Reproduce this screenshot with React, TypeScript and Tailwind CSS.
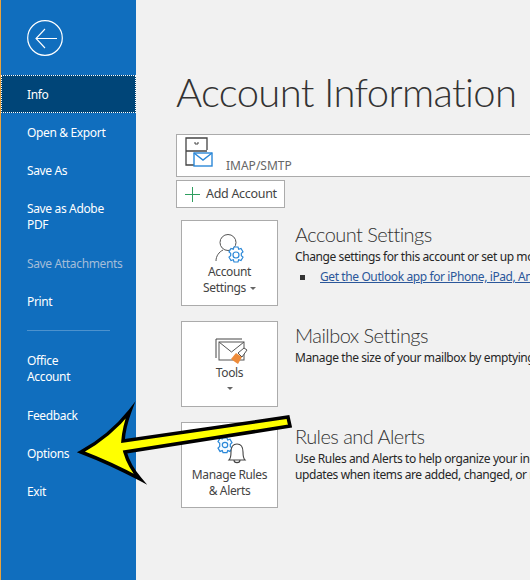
const font = { fontFamily: '"Noto Sans", "Open Sans", sans-serif' }
const headFont = { fontFamily: 'Lato, "Noto Sans", sans-serif' }

function NavItem({ label, active, disabled }: { label: string; active?: boolean; disabled?: boolean }) {
  return (
    <a
      href="#"
      className={
        "flex h-[38px] items-center whitespace-nowrap pl-[26px] pt-[2px] text-[12px] leading-[16px] tracking-[-0.35px] " +
        (active ? "bg-[#004578] text-white outline outline-1 -outline-offset-1 outline-dotted outline-white " : "") +
        (disabled ? "text-[#a3bdd9]" : "text-white")
      }
    >
      {label}
    </a>
  )
}

function AccountIcon() {
  return (
    <svg width="42" height="36" viewBox="0 0 42 36" fill="none">
      <circle cx="15" cy="9.500" r="8" stroke="#555" strokeWidth="1" />
      <path d="M3 28c0-5 3-9 7-11M20 17l3 1" stroke="#555" strokeWidth="1" />
      <path
        d="M21 14h4l.7 2.200 2.300-.8 2 3.400-1.700 1.600v2.200l1.700 1.600-2 3.400-2.300-.8-.7 2.200h-4l-.7-2.200-2.300.8-2-3.400 1.700-1.600v-2.200l-1.700-1.600 2-3.400 2.300.8z"
        stroke="#2b88d8"
        strokeWidth="1.200"
        fill="#fff"
      />
      <circle cx="23" cy="22" r="3" stroke="#2b88d8" strokeWidth="1.200" />
    </svg>
  )
}

function ToolsIcon() {
  return (
    <svg width="34" height="28" viewBox="0 0 34 28" fill="none">
      <path d="M1 20V1h26" stroke="#444" strokeWidth="1" />
      <rect x="4" y="4" width="25" height="18" stroke="#555" strokeWidth="1" fill="#fff" />
      <path d="M4 4l12.500 10L29 4" stroke="#555" strokeWidth="1" />
      <path d="M16 21l5-6 6 4-4 7-3-2z" fill="#ed8b3a" />
      <path d="M23 15l6-5 3 2-5 7z" fill="#fff" stroke="#555" strokeWidth="1" />
    </svg>
  )
}

function RulesIcon() {
  return (
    <svg width="36" height="32" viewBox="0 0 36 32" fill="none">
      <path
        d="M9 1h4l.7 2 2.300-.8 2 3.400-1.700 1.600v2.200l1.700 1.600-2 3.400-2.300-.8-.7 2H9l-.7-2-2.300.8-2-3.400 1.700-1.600V6.200L4 4.600l2-3.400 2.300.8z"
        stroke="#2b88d8"
        strokeWidth="1.200"
        fill="#f7fbff"
      />
      <circle cx="11" cy="8" r="2.700" stroke="#2b88d8" strokeWidth="1.200" />
      <path d="M15 23c2-2 2-4 2-8 0-5 2-8 6-8s6 3 6 8c0 4 0 6 2 8z" stroke="#444" strokeWidth="1.100" fill="#fff" />
      <path d="M20 23c0 3.500 6 3.500 6 0" stroke="#444" strokeWidth="1.100" />
    </svg>
  )
}

function Caret() {
  return <span className="inline-block h-0 w-0 border-x-[3px] border-t-[3px] border-x-transparent border-t-[#666]" />
}

function ToolCard({ children }: { children: React.ReactNode }) {
  return (
    <div className="flex h-[86px] w-[97px] shrink-0 flex-col items-center border border-[#ababab] bg-white text-center text-[12px] leading-[16px] tracking-[-0.35px] text-[#444]">
      {children}
    </div>
  )
}

function Section({ title, children }: { title: string; children: React.ReactNode }) {
  return (
    <div className="ml-[17px] mt-[1px] whitespace-nowrap">
      <h2 className="text-[20px] font-light leading-[26px] tracking-[-0.55px] text-[#333]" style={headFont}>{title}</h2>
      <div className="mt-[2px] text-[12px] leading-[16px] tracking-[-0.4px] text-[#262626]">{children}</div>
    </div>
  )
}

export default function App() {
  return (
    <div className="relative flex h-[580px] w-[530px] overflow-hidden bg-[#f1f1f1]" style={font}>
      {/* Sidebar */}
      <aside className="h-full w-[136px] shrink-0 border-l border-[#e8a33d] bg-[#106ebe]">
        <div className="flex h-[75px] items-start pl-[26px] pt-5">
          <svg width="36" height="36" viewBox="0 0 36 36" fill="none" stroke="#fff">
            <circle cx="18" cy="18" r="17.300" strokeWidth="1.200" />
            <path d="M30 18.500H9M18 9l-9 9.500 9 9.500" strokeWidth="1.100" />
          </svg>
        </div>
        <nav className="flex flex-col">
          <NavItem label="Info" active />
          <NavItem label="Open & Export" />
          <NavItem label="Save As" />
          <div className="flex h-[55px] items-center pl-[26px] pr-6 text-[12px] leading-[16px] tracking-[-0.35px] text-white">Save as Adobe PDF</div>
          <NavItem label="Save Attachments" disabled />
          <NavItem label="Print" />
          <div className="mx-[26px] mb-[11px] mt-[10px] border-t border-[#4c92ce]" />
          <div className="flex h-[54px] items-center pl-[26px] pr-12 text-[12px] leading-[16px] tracking-[-0.35px] text-white">Office Account</div>
          <NavItem label="Feedback" />
          <NavItem label="Options" />
          <NavItem label="Exit" />
        </nav>
      </aside>

      {/* Main content */}
      <main className="min-w-0 flex-1 pl-[40px]">
        <h1 className="mt-[64px] whitespace-nowrap text-[40px] font-light leading-[56px] tracking-[-0.65px] text-[#333]" style={headFont}>Account Information</h1>

        <div className="mt-[14px] flex h-[43px] items-end border border-r-0 border-[#ababab] bg-white pl-[8px]">
          <svg width="28" height="32" viewBox="0 0 28 32" fill="none" className="mb-[7px]">
            <path d="M9 28H1V1h21v12M1 14h21" stroke="#444" strokeWidth="1.300" />
            <path d="M10 5v2h3V5" stroke="#444" strokeWidth="1" />
            <rect x="9" y="16" width="18" height="13" fill="#fff" stroke="#2b88d8" strokeWidth="1.400" />
            <path d="M9 16l9 7 9-7" stroke="#2b88d8" strokeWidth="1.400" />
          </svg>
          <span className="mb-[2px] ml-[13px] text-[12px] leading-[16px] text-[#666]">IMAP/SMTP</span>
        </div>

        <button className="mt-[3px] flex h-[28px] w-[109px] items-center gap-[6px] border border-[#ababab] bg-white pl-2 text-[12.5px] tracking-[-0.3px] text-[#444]">
          <svg width="15" height="15" viewBox="0 0 15 15" stroke="#2f9e5f" strokeWidth="1">
            <path d="M7.500 0v15M0 7.500h15" />
          </svg>
          Add Account
        </button>

        <div className="ml-[5px] mt-[12px] flex flex-col gap-[15px]">
          <div className="flex">
            <ToolCard>
              <div className="ml-[8px] mt-[12px] h-[36px]"><AccountIcon /></div>
              <div className="mt-[-5px]">Account</div>
              <div className="flex items-center gap-1">Settings <Caret /></div>
            </ToolCard>
            <Section title="Account Settings">
              <p>Change settings for this account or set up more connections.</p>
              <p className="mt-1 flex items-center">
                <span className="ml-[5px] mr-[15px] h-[5px] w-[5px] bg-[#333]" />
                <a href="#" className="text-[#2b579a] underline">Get the Outlook app for iPhone, iPad, Android, or Windows 10 Mobile.</a>
              </p>
            </Section>
          </div>

          <div className="flex">
            <ToolCard>
              <div className="ml-[4px] mt-[16px] h-[28px]"><ToolsIcon /></div>
              <div className="mt-[-1px]">Tools</div>
              <div className="mt-[6px] flex"><Caret /></div>
            </ToolCard>
            <Section title="Mailbox Settings">
              <p className="mt-[2px]">Manage the size of your mailbox by emptying Deleted Items and archiving.</p>
            </Section>
          </div>

          <div className="flex">
            <ToolCard>
              <div className="ml-[4px] mt-[14px] h-[32px]"><RulesIcon /></div>
              <div className="mt-[-2px]">Manage Rules</div>
              <div>&amp; Alerts</div>
            </ToolCard>
            <Section title="Rules and Alerts">
              <p className="mt-[2px]">Use Rules and Alerts to help organize your incoming e-mail messages, and receive</p>
              <p>updates when items are added, changed, or removed.</p>
            </Section>
          </div>
        </div>
      </main>

      {/* Annotation arrow */}
      <svg width="530" height="580" viewBox="0 0 530 580" className="pointer-events-none absolute left-0 top-0">
        <path
          d="M81 452Q110 436 130 411Q124 427 123 441L288 417L290 426L125 452Q129 466 140 479Q110 463 81 452Z"
          fill="#ffff00"
          stroke="#000"
          strokeWidth="3.500"
          strokeLinejoin="miter"
          strokeMiterlimit="10"
        />
      </svg>
    </div>
  )
}
